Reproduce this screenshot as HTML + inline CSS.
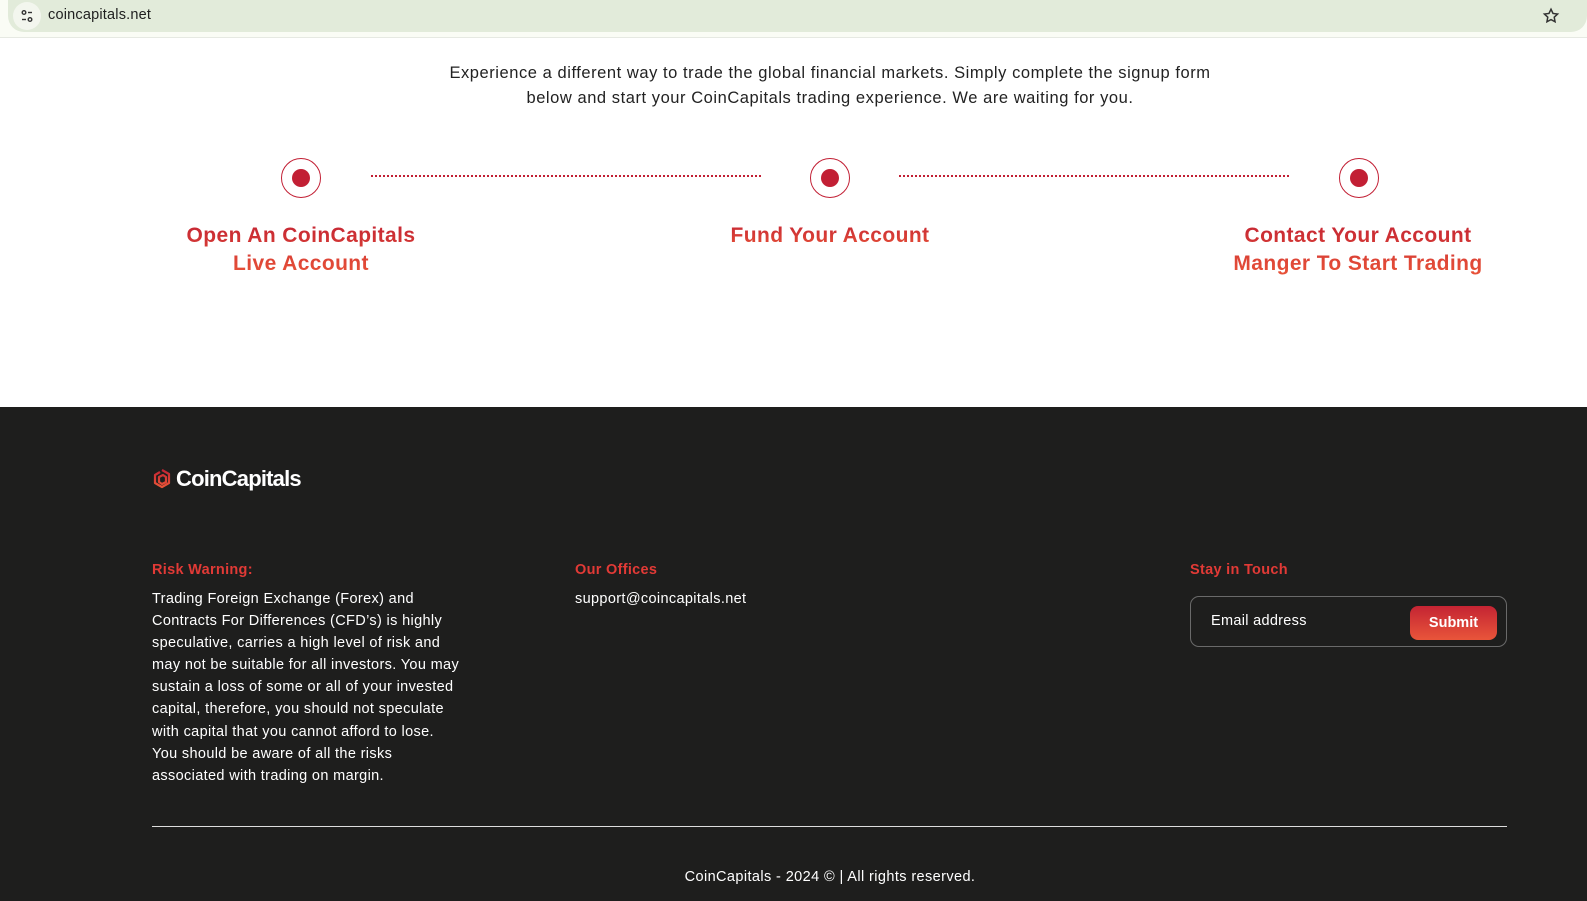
<!DOCTYPE html>
<html><head><meta charset="utf-8">
<style>
*{margin:0;padding:0;box-sizing:border-box}
html,body{width:1587px;height:901px;overflow:hidden;font-family:"Liberation Sans",sans-serif;background:#fff}
.bar{position:absolute;left:0;top:0;width:1587px;height:38px;background:#fafcf5;border-bottom:1px solid #e6e9e2}
.bar .pill{position:absolute;left:8px;top:0;width:1579px;height:32px;background:#e2ebda;border-radius:0 0 16px 16px}
.bar .ic{position:absolute;left:13px;top:2px;width:28px;height:28px;border-radius:50%;background:#f3f6ee}
.bar .url{position:absolute;left:48px;top:7px;font-size:14.5px;color:#1f1f1f;letter-spacing:.2px}
.intro{position:absolute;top:61px;left:0;width:1660px;text-align:center;font-size:16.5px;line-height:25px;color:#222;letter-spacing:.55px}
.dot{position:absolute;top:158px;width:40px;height:40px;border:1.3px solid #c21f34;border-radius:50%}
.dot:after{content:"";position:absolute;left:10px;top:10px;width:18px;height:18px;border-radius:50%;background:#c21f34}
.line{position:absolute;top:175px;height:0;border-top:2px dotted #c21f34}
.st{position:absolute;top:222px;width:360px;text-align:center;font-weight:bold;font-size:21px;line-height:28px;letter-spacing:.4px;
background:linear-gradient(#c42433,#ea5538);-webkit-background-clip:text;background-clip:text;color:transparent}
.foot{position:absolute;left:0;top:407px;width:1587px;height:494px;background:#1e1e1d}
.logo{position:absolute;left:152px;top:466px;font-size:22px;font-weight:bold;letter-spacing:-.8px;color:#fff}
.h{position:absolute;top:562px;font-size:14.5px;font-weight:bold;color:#e23a36;letter-spacing:.3px}
.p{position:absolute;font-size:14.5px;line-height:22.1px;color:#fff;white-space:nowrap;letter-spacing:.35px}
.inp{position:absolute;left:1190px;top:596px;width:317px;height:51px;border:1px solid #6a6a6a;border-radius:9px;color:#fff}
.inp span{position:absolute;left:20px;top:16px;font-size:14.5px;letter-spacing:.3px}
.btn{position:absolute;left:219px;top:9px;width:87px;height:34px;border-radius:8px;background:linear-gradient(#c42433,#e9553a);font-weight:bold;font-size:14.5px;text-align:center;line-height:34px;color:#fff}
.hr{position:absolute;left:152px;top:826px;width:1355px;height:1px;background:#ddd}
.copy{position:absolute;left:0;top:869px;width:1660px;text-align:center;font-size:14.5px;color:#fff;letter-spacing:.4px}
</style></head><body>
<div class="bar"><div class="pill"></div><div class="ic">
<svg width="28" height="28" viewBox="0 0 28 28" fill="none" stroke="#333" stroke-width="1.4"><circle cx="11" cy="10.5" r="1.8"/><line x1="15" y1="10.5" x2="19" y2="10.5"/><line x1="9" y1="17.5" x2="13" y2="17.5"/><circle cx="17" cy="17.5" r="1.8"/></svg></div>
<div class="url">coincapitals.net</div>
<svg style="position:absolute;left:1542px;top:7px" width="18" height="18" viewBox="0 0 24 24" fill="none" stroke="#333" stroke-width="2"><path d="M12 3l2.7 5.6 6.1.8-4.5 4.2 1.1 6.1L12 16.8 6.6 19.7l1.1-6.1-4.5-4.2 6.1-.8z"/></svg>
</div>
<div class="intro">Experience a different way to trade the global financial markets. Simply complete the signup form<br>below and start your CoinCapitals trading experience. We are waiting for you.</div>
<div class="dot" style="left:281px"></div><div class="dot" style="left:810px"></div><div class="dot" style="left:1339px"></div>
<div class="line" style="left:371px;width:390px"></div><div class="line" style="left:899px;width:390px"></div>
<div class="st" style="left:121px">Open An CoinCapitals<br>Live Account</div>
<div class="st" style="left:650px">Fund Your Account</div>
<div class="st" style="left:1178px">Contact Your Account<br>Manger To Start Trading</div>
<div class="foot"></div>
<svg style="position:absolute;left:152px;top:468px" width="20" height="22" viewBox="0 0 20 22"><defs><linearGradient id="g" x1="0" y1="0" x2="0" y2="1"><stop offset="0" stop-color="#c42433"/><stop offset="1" stop-color="#ea5538"/></linearGradient></defs><path d="M10 2L17 6v9l-7 4-7-4V7l5-3M7 9l4-2 3 2v5l-4 2-3-2z" fill="none" stroke="url(#g)" stroke-width="2.2" stroke-linejoin="round"/></svg>
<div class="logo" style="left:176px">CoinCapitals</div>
<div class="h" style="left:152px">Risk Warning:</div>
<div class="p" style="left:152px;top:588px">Trading Foreign Exchange (Forex) and<br>Contracts For Differences (CFD’s) is highly<br>speculative, carries a high level of risk and<br>may not be suitable for all investors. You may<br>sustain a loss of some or all of your invested<br>capital, therefore, you should not speculate<br>with capital that you cannot afford to lose.<br>You should be aware of all the risks<br>associated with trading on margin.</div>
<div class="h" style="left:575px">Our Offices</div>
<div class="p" style="left:575px;top:588px">support@coincapitals.net</div>
<div class="h" style="left:1190px">Stay in Touch</div>
<div class="inp"><span>Email address</span><div class="btn">Submit</div></div>
<div class="hr"></div>
<div class="copy">CoinCapitals - 2024 © | All rights reserved.</div>
</body></html>
